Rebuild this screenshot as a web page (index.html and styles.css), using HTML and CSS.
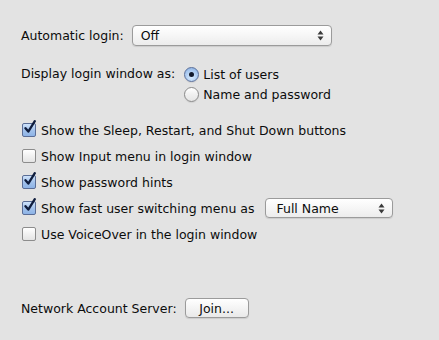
FILE: index.html
```html
<!DOCTYPE html>
<html>
<head>
<meta charset="utf-8">
<link rel="stylesheet" href="styles.css">
</head>
<body>
<div class="pane">
  <div class="row row-auto">
    <span class="label">Automatic login:</span>
    <div class="popup popup-wide"><span>Off</span><span class="arrows"><svg width="7" height="11" viewBox="0 0 7 11"><path d="M3.5 0.5 L6.5 4.5 L0.5 4.5 Z M3.5 10.5 L6.5 6.5 L0.5 6.5 Z" fill="#3a3a3a"/></svg></span></div>
  </div>
  <div class="row row-display">
    <span class="label">Display login window as:</span>
    <div class="radios">
      <div class="radio-row"><span class="radio on"><span class="dot"></span></span><span>List of users</span></div>
      <div class="radio-row"><span class="radio"></span><span>Name and password</span></div>
    </div>
  </div>
  <div class="checks">
    <div class="check-row"><span class="box on"><svg class="tick" width="14" height="15" viewBox="0 0 14 15"><path d="M2.5 8.2 L5.3 11.6 L11.8 1.2" fill="none" stroke="#0f1d3d" stroke-width="2.3" stroke-linecap="round" stroke-linejoin="round"/></svg></span><span>Show the Sleep, Restart, and Shut Down buttons</span></div>
    <div class="check-row"><span class="box"></span><span>Show Input menu in login window</span></div>
    <div class="check-row"><span class="box on"><svg class="tick" width="14" height="15" viewBox="0 0 14 15"><path d="M2.5 8.2 L5.3 11.6 L11.8 1.2" fill="none" stroke="#0f1d3d" stroke-width="2.3" stroke-linecap="round" stroke-linejoin="round"/></svg></span><span>Show password hints</span></div>
    <div class="check-row"><span class="box on"><svg class="tick" width="14" height="15" viewBox="0 0 14 15"><path d="M2.5 8.2 L5.3 11.6 L11.8 1.2" fill="none" stroke="#0f1d3d" stroke-width="2.3" stroke-linecap="round" stroke-linejoin="round"/></svg></span><span>Show fast user switching menu as</span><div class="popup popup-name"><span>Full Name</span><span class="arrows"><svg width="7" height="11" viewBox="0 0 7 11"><path d="M3.5 0.5 L6.5 4.5 L0.5 4.5 Z M3.5 10.5 L6.5 6.5 L0.5 6.5 Z" fill="#3a3a3a"/></svg></span></div></div>
    <div class="check-row"><span class="box"></span><span>Use VoiceOver in the login window</span></div>
  </div>
  <div class="row row-net">
    <span class="label">Network Account Server:</span>
    <div class="button">Join...</div>
  </div>
</div>
</body>
</html>
```

FILE: styles.css
```css
html, body {
  margin: 0;
  padding: 0;
  background: #e3e3e3;
}
body {
  width: 439px;
  height: 340px;
  overflow: hidden;
  font-family: "DejaVu Sans", "Lucida Grande", sans-serif;
  font-size: 12.5px;
  color: #0c0c0c;
}
.pane {
  padding: 25px 0 0 21px;
  display: flex;
  flex-direction: column;
}
.row {
  display: flex;
  align-items: center;
}
.row-auto {
  height: 21px;
  gap: 8px;
}
.row-display {
  margin-top: 18px;
  align-items: flex-start;
  gap: 9px;
}
.row-display .label {
  line-height: 20px;
}
.radios {
  display: flex;
  flex-direction: column;
}
.radio-row {
  display: flex;
  align-items: center;
  gap: 4px;
  height: 20px;
}
.radio {
  width: 13px;
  height: 13px;
  border-radius: 50%;
  border: 1px solid #8a8a8a;
  background: linear-gradient(#ffffff, #f0f0f0 50%, #e6e6e6);
  box-shadow: 0 1px 1px rgba(0,0,0,0.08);
  display: flex;
  align-items: center;
  justify-content: center;
  box-sizing: content-box;
}
.radio.on {
  border-color: #5b6f9a;
  background: radial-gradient(circle at 50% 70%, #d9ecff, #a9c8ef 60%, #7ea7dd);
}
.dot {
  width: 5px;
  height: 5px;
  border-radius: 50%;
  background: #131a2c;
}
.checks {
  margin-top: 13px;
  display: flex;
  flex-direction: column;
}
.check-row {
  display: flex;
  align-items: center;
  height: 26px;
}
.box {
  position: relative;
  width: 12px;
  height: 12px;
  border: 1px solid #8c8c8c;
  border-radius: 2px;
  background: linear-gradient(#ffffff, #f1f1f1 50%, #e4e4e4);
  margin-left: 1px;
  margin-right: 5px;
  flex: none;
}
.box.on {
  border-color: #5a6d96;
  background: linear-gradient(#cfe3fb, #a4c3ec 50%, #8db3e6);
}
.tick {
  position: absolute;
  left: 0;
  top: -4px;
}
.popup {
  height: 19px;
  border: 1px solid #9b9b9b;
  border-radius: 4px;
  background: linear-gradient(#ffffff, #f6f6f6 50%, #ececec);
  box-shadow: 0 1px 1px rgba(0,0,0,0.10);
  display: flex;
  align-items: center;
  justify-content: space-between;
  padding: 0 7px 0 8px;
  box-sizing: border-box;
  color: #0c0c0c;
}
.popup-wide {
  width: 200px;
  height: 21px;
}
.popup-name {
  width: 128px;
  height: 20px;
  margin-left: 11px;
  padding-left: 10px;
}
.arrows {
  display: flex;
  align-items: center;
}
.row-net {
  margin-top: 51px;
  gap: 8px;
}
.button {
  width: 64px;
  height: 20px;
  border: 1px solid #9b9b9b;
  border-radius: 4px;
  background: linear-gradient(#ffffff, #f4f4f4 50%, #e9e9e9);
  box-shadow: 0 1px 1px rgba(0,0,0,0.10);
  box-sizing: border-box;
  display: flex;
  align-items: center;
  justify-content: center;
}
```
